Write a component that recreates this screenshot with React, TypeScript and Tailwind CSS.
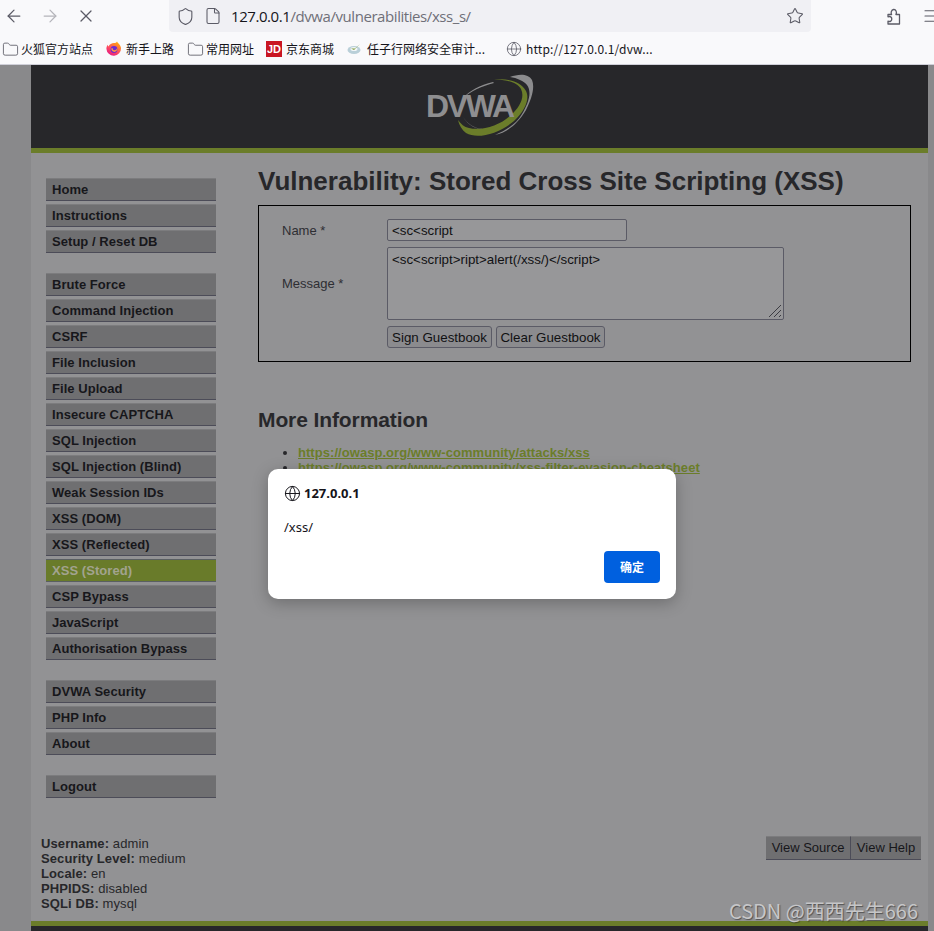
import { ArrowLeft, ArrowRight, File, Folder, Globe, Menu, Shield, Star, X } from 'lucide-react';

const menuGroups = [
  ['Home', 'Instructions', 'Setup / Reset DB'],
  [
    'Brute Force',
    'Command Injection',
    'CSRF',
    'File Inclusion',
    'File Upload',
    'Insecure CAPTCHA',
    'SQL Injection',
    'SQL Injection (Blind)',
    'Weak Session IDs',
    'XSS (DOM)',
    'XSS (Reflected)',
    'XSS (Stored)',
    'CSP Bypass',
    'JavaScript',
    'Authorisation Bypass',
  ],
  ['DVWA Security', 'PHP Info', 'About'],
  ['Logout'],
];

const userInfo = [
  ['Username:', 'admin'],
  ['Security Level:', 'medium'],
  ['Locale:', 'en'],
  ['PHPIDS:', 'disabled'],
  ['SQLi DB:', 'mysql'],
];

function Bookmark({ icon, label, className }: { icon: React.ReactNode; label: string; className: string }) {
  return (
    <div className={`flex items-center shrink-0 ${className}`}>
      {icon}
      <span className="whitespace-nowrap">{label}</span>
    </div>
  );
}

function FirefoxIcon() {
  return (
    <svg width="16" height="16" viewBox="0 0 16 16" className="shrink-0">
      <defs>
        <linearGradient id="fx" x1="0.8" y1="0" x2="0.2" y2="1">
          <stop offset="0" stopColor="#ffb100" />
          <stop offset="0.55" stopColor="#ff4f5e" />
          <stop offset="1" stopColor="#e31587" />
        </linearGradient>
      </defs>
      <path d="M11 0.5c0.5 1.5 3.5 3 4 6.5a7.3 7.3 0 1 1-14.6 0.8c0-1.8 0.6-3 1.4-4 0 0.8 0.3 1.4 0.8 1.7C3.2 3.2 6 2 8 2c1.300 0 2.500-0.500 3-1.500z" fill="url(#fx)" />
      <circle cx="8" cy="8.500" r="3.400" fill="#6b2bd0" />
      <path d="M5.500 7a3 3 0 1 0 5.500-0.500c0.200 2-1.500 3-3 2.700-1-0.200-1.300-1-1-1.700z" fill="#ff9640" />
    </svg>
  );
}

function ExtensionIcon() {
  return (
    <svg width="16" height="17" viewBox="0 0 16 17" fill="none" stroke="currentColor" strokeWidth="1.300" strokeLinejoin="round" className="shrink-0">
      <path d="M2 6.500h3.600c-1-1.600-.3-4.600 2-5 2.200-.3 3.600 2.600 2.300 5h3.600v9.500H2v-2.800c2.300.9 3.800-.4 3.800-2.200S4.300 7.900 2 8.800z" />
    </svg>
  );
}

function DvwaLogo() {
  return (
    <svg width="125" height="80" viewBox="0 0 125 80" className="shrink-0 ml-[6px]">
      <path d="M90 10C98 7 108 6 112 13c3 7 0 18-6 30-8 14-20 23-31 25 12-5 22-12 27-21 7-12 10-22 5-29-3-4-10-7-17-8z" fill="#8c8c8e" />
      <path d="M72 13C84 11 100 13 106 24c4 8-1 20-12 30C80 66 58 73 46 66c-4-3-7-8-8-13 3 4 6 7 11 8 12 3 30-2 41-12 10-9 15-19 11-27-4-7-16-10-29-9z" fill="#6b7d2a" />
      <path d="M73 15C60 18 49 24 43 31c8-7 19-12 31-15zM43 50c5 7 10 11 20 12-8 0-15-4-20-12z" fill="#8c8c8e" />
      <text x="6" y="50" fontFamily="'Liberation Sans', sans-serif" fontWeight="700" fontSize="32" letterSpacing="-2.300" fill="#8e8e90">
        DVWA
      </text>
    </svg>
  );
}

export default function App() {
  return (
    <div className="relative flex flex-col w-[934px] h-[931px] overflow-hidden bg-[#f9f9fb] font-['Liberation_Sans',sans-serif]">
      {/* browser chrome */}
      <div className="flex items-start h-[32px] shrink-0 text-[#5b5b66]">
        <div className="flex items-center shrink-0 h-[32px] gap-[16px] pl-[4px] w-[169px]">
          <ArrowLeft size={20} strokeWidth={1.500} />
          <ArrowRight size={20} strokeWidth={1.500} className="text-[#b4b4ba]" />
          <X size={20} strokeWidth={1.500} />
        </div>
        <div className="flex items-center shrink-0 w-[642px] h-[32px] bg-[#f0f0f4] rounded-b-[4px] pl-[7px] pr-[7px]">
          <Shield size={19} strokeWidth={1.400} />
          <File size={18} strokeWidth={1.400} className="ml-[9px]" />
          <span className="ml-[9px] text-[15px] font-['Open_Sans',sans-serif] whitespace-nowrap tracking-[-0.43px]">
            <span className="text-[#15141a]">127.0.0.1</span>
            <span className="text-[#6f6f78]">/dvwa/vulnerabilities/xss_s/</span>
          </span>
          <Star size={18} strokeWidth={1.400} className="ml-auto" />
        </div>
        <div className="flex items-center shrink-0 h-[32px] pl-[75px] gap-[20px]">
          <ExtensionIcon />
          <Menu size={18} strokeWidth={1.500} className="shrink-0" />
        </div>
      </div>
      <div className="flex items-center h-[33px] shrink-0 pt-[2px] pl-[2px] border-b border-[#cfcfd8] text-[12px] text-[#15141a] font-['Noto_Sans_CJK_SC','Noto_Sans',sans-serif]">
        <Bookmark icon={<Folder size={17} strokeWidth={1.200} className="text-[#5b5b66]" />} label="火狐官方站点" className="w-[104px] gap-[2px]" />
        <Bookmark icon={<FirefoxIcon />} label="新手上路" className="w-[81px] gap-[4px]" />
        <Bookmark icon={<Folder size={17} strokeWidth={1.200} className="text-[#5b5b66]" />} label="常用网址" className="w-[79px] gap-[2px]" />
        <Bookmark
          icon={
            <span className="flex items-center justify-center w-[16px] h-[16px] bg-[#c91623] text-white text-[11px] font-bold font-['Liberation_Sans',sans-serif]">
              JD
            </span>
          }
          label="京东商城"
          className="w-[81px] gap-[4px]"
        />
        <Bookmark
          icon={
            <svg width="14" height="12" viewBox="0 0 14 12" className="shrink-0 mr-[2px]">
              <ellipse cx="7" cy="7" rx="6.500" ry="4" fill="#b9cfd8" />
              <ellipse cx="7" cy="6" rx="3.500" ry="2" fill="#f2f6f8" />
              <path d="M4 5.500l3 1.500 6-6-5 4.500z" fill="#7f9a3c" />
            </svg>
          }
          label="任子行网络安全审计..."
          className="w-[159px] gap-[4px]"
        />
        <Bookmark
          icon={<Globe size={16} strokeWidth={1.200} className="text-[#5b5b66]" />}
          label="http://127.0.0.1/dvw..."
          className="gap-[4px] tracking-[0.15px]"
        />
      </div>

      {/* dimmed page */}
      <div className="flex-1 min-h-0 bg-[#89898b] pl-[31px] pr-[6px]">
        <div className="flex flex-col h-full bg-[#929294]">
          <div className="flex items-center justify-center h-[88px] shrink-0 bg-[#27272a] border-b-[5px] border-[#6b7d2a]">
            <DvwaLogo />
          </div>

          <div className="flex flex-1 min-h-0">
            <div className="w-[227px] shrink-0 pl-[15px] pt-[25px]">
              {menuGroups.map((group) => (
                <div key={group[0]} className="mb-[20px]">
                  {group.map((item) => (
                    <div
                      key={item}
                      className={
                        item === 'XSS (Stored)'
                          ? "flex items-center w-[170px] h-[23px] mb-[3px] pl-[6px] text-[13px] font-bold tracking-[0.05px] bg-[#697b2a] text-[#a2a38f] border-y border-[#5a5f62]"
                          : "flex items-center w-[170px] h-[23px] mb-[3px] pl-[6px] text-[13px] font-bold tracking-[0.05px] bg-[#6f6f71] text-[#17171b] border-t border-[#7c7c7e] border-b border-b-[#4c4c58]"
                      }
                    >
                      {item}
                    </div>
                  ))}
                </div>
              ))}
            </div>

            <div className="flex-1 min-w-0 pr-[17px] text-[#27272a]">
              <h1 className="mt-[10px] h-[36px] leading-[36px] text-[26px] font-bold whitespace-nowrap">
                Vulnerability: Stored Cross Site Scripting (XSS)
              </h1>
              <div className="mt-[6px] h-[157px] border border-black pt-[13px] pl-[23px] text-[13px]">
                <div className="flex items-center h-[22px]">
                  <span className="w-[105px] pt-[1px] text-[#2e2e33]">Name *</span>
                  <div className="w-[240px] h-[22px] flex items-center pl-[4px] pt-[1px] text-[13.33px] text-[#111113] bg-[#979799] border border-[#5b5b66] rounded-[2px]">
                    {'<sc<script'}
                  </div>
                </div>
                <div className="flex items-center mt-[6px] h-[73px]">
                  <span className="w-[105px] text-[#2e2e33]">Message *</span>
                  <div className="relative w-[397px] h-[73px] pl-[4px] pt-[2px] text-[13.33px] text-[#111113] bg-[#979799] border border-[#5b5b66] rounded-[2px]">
                    {'<sc<script>ript>alert(/xss/)</script>'}
                    <svg width="14" height="14" viewBox="0 0 14 14" className="absolute right-[1px] bottom-[1px]">
                      <path d="M1 13L13 1M6 13L13 6M11 13L13 11" stroke="#3c3c42" strokeWidth="1" fill="none" />
                    </svg>
                  </div>
                </div>
                <div className="flex gap-[4px] mt-[6px] ml-[105px]">
                  <div className="flex items-center justify-center w-[105px] h-[22px] pt-[1px] text-[13.33px] text-[#111113] bg-[#8b8b8e] border border-[#5b5b66] rounded-[3px]">
                    Sign Guestbook
                  </div>
                  <div className="flex items-center justify-center w-[109px] h-[22px] pt-[1px] text-[13.33px] text-[#111113] bg-[#8b8b8e] border border-[#5b5b66] rounded-[3px]">
                    Clear Guestbook
                  </div>
                </div>
              </div>
              <h2 className="mt-[45px] h-[26px] leading-[26px] text-[21px] font-bold tracking-[-0.1px] whitespace-nowrap">More Information</h2>
              <ul className="mt-[12px] pl-[40px] list-disc text-[13px] leading-[15px] font-bold tracking-[0.05px] text-[#6b7d2a] marker:text-[#27272a]">
                <li className="underline">https://owasp.org/www-community/attacks/xss</li>
                <li className="underline">https://owasp.org/www-community/xss-filter-evasion-cheatsheet</li>
              </ul>
            </div>
          </div>

          <div className="flex items-start justify-between h-[85px] shrink-0 pl-[10px] pr-[7px] text-[13px] text-[#27272a]">
            <div className="leading-[15px] tracking-[0.1px]">
              {userInfo.map(([key, value]) => (
                <div key={key} className="whitespace-nowrap">
                  <span className="font-bold">{key}</span> {value}
                </div>
              ))}
            </div>
            <div className="flex">
              <div className="flex items-center justify-center w-[85px] h-[24px] bg-[#6f6f71] text-[#17171b] border-t border-[#7c7c7e] border-b border-b-[#4c4c58] border-r border-r-[#4c4c58]">
                View Source
              </div>
              <div className="flex items-center justify-center w-[70px] h-[24px] bg-[#6f6f71] text-[#17171b] border-t border-[#7c7c7e] border-b border-b-[#4c4c58]">
                View Help
              </div>
            </div>
          </div>
          <div className="h-[10px] shrink-0 bg-[#27272a] border-t-[5px] border-[#6b7d2a]" />
        </div>
      </div>

      {/* alert dialog */}
      <div className="absolute left-[268px] top-[469px] w-[408px] h-[130px] bg-white rounded-[10px] shadow-[0_4px_16px_rgba(0,0,0,0.25)] px-[16px] pt-[16px] font-['Noto_Sans',sans-serif] text-[#15141a]">
        <div className="flex items-center gap-[3px] h-[17px] text-[13px] font-bold">
          <Globe size={17} strokeWidth={1.400} />
          127.0.0.1
        </div>
        <div className="mt-[17px] h-[17px] leading-[17px] text-[13px]">/xss/</div>
        <div className="flex justify-end mt-[15px]">
          <div className="flex items-center justify-center w-[56px] h-[32px] bg-[#0060df] rounded-[4px] text-white text-[12px] font-bold font-['Noto_Sans_CJK_SC',sans-serif]">
            确定
          </div>
        </div>
      </div>

      {/* watermark */}
      <div className="absolute right-[16px] top-[898px] text-[20px] leading-[26px] text-[#c6c6c8] [text-shadow:1px_1px_1px_rgba(40,40,40,0.6)] font-['Noto_Sans_CJK_SC',sans-serif] whitespace-nowrap">
        CSDN @西西先生666
      </div>
    </div>
  );
}
